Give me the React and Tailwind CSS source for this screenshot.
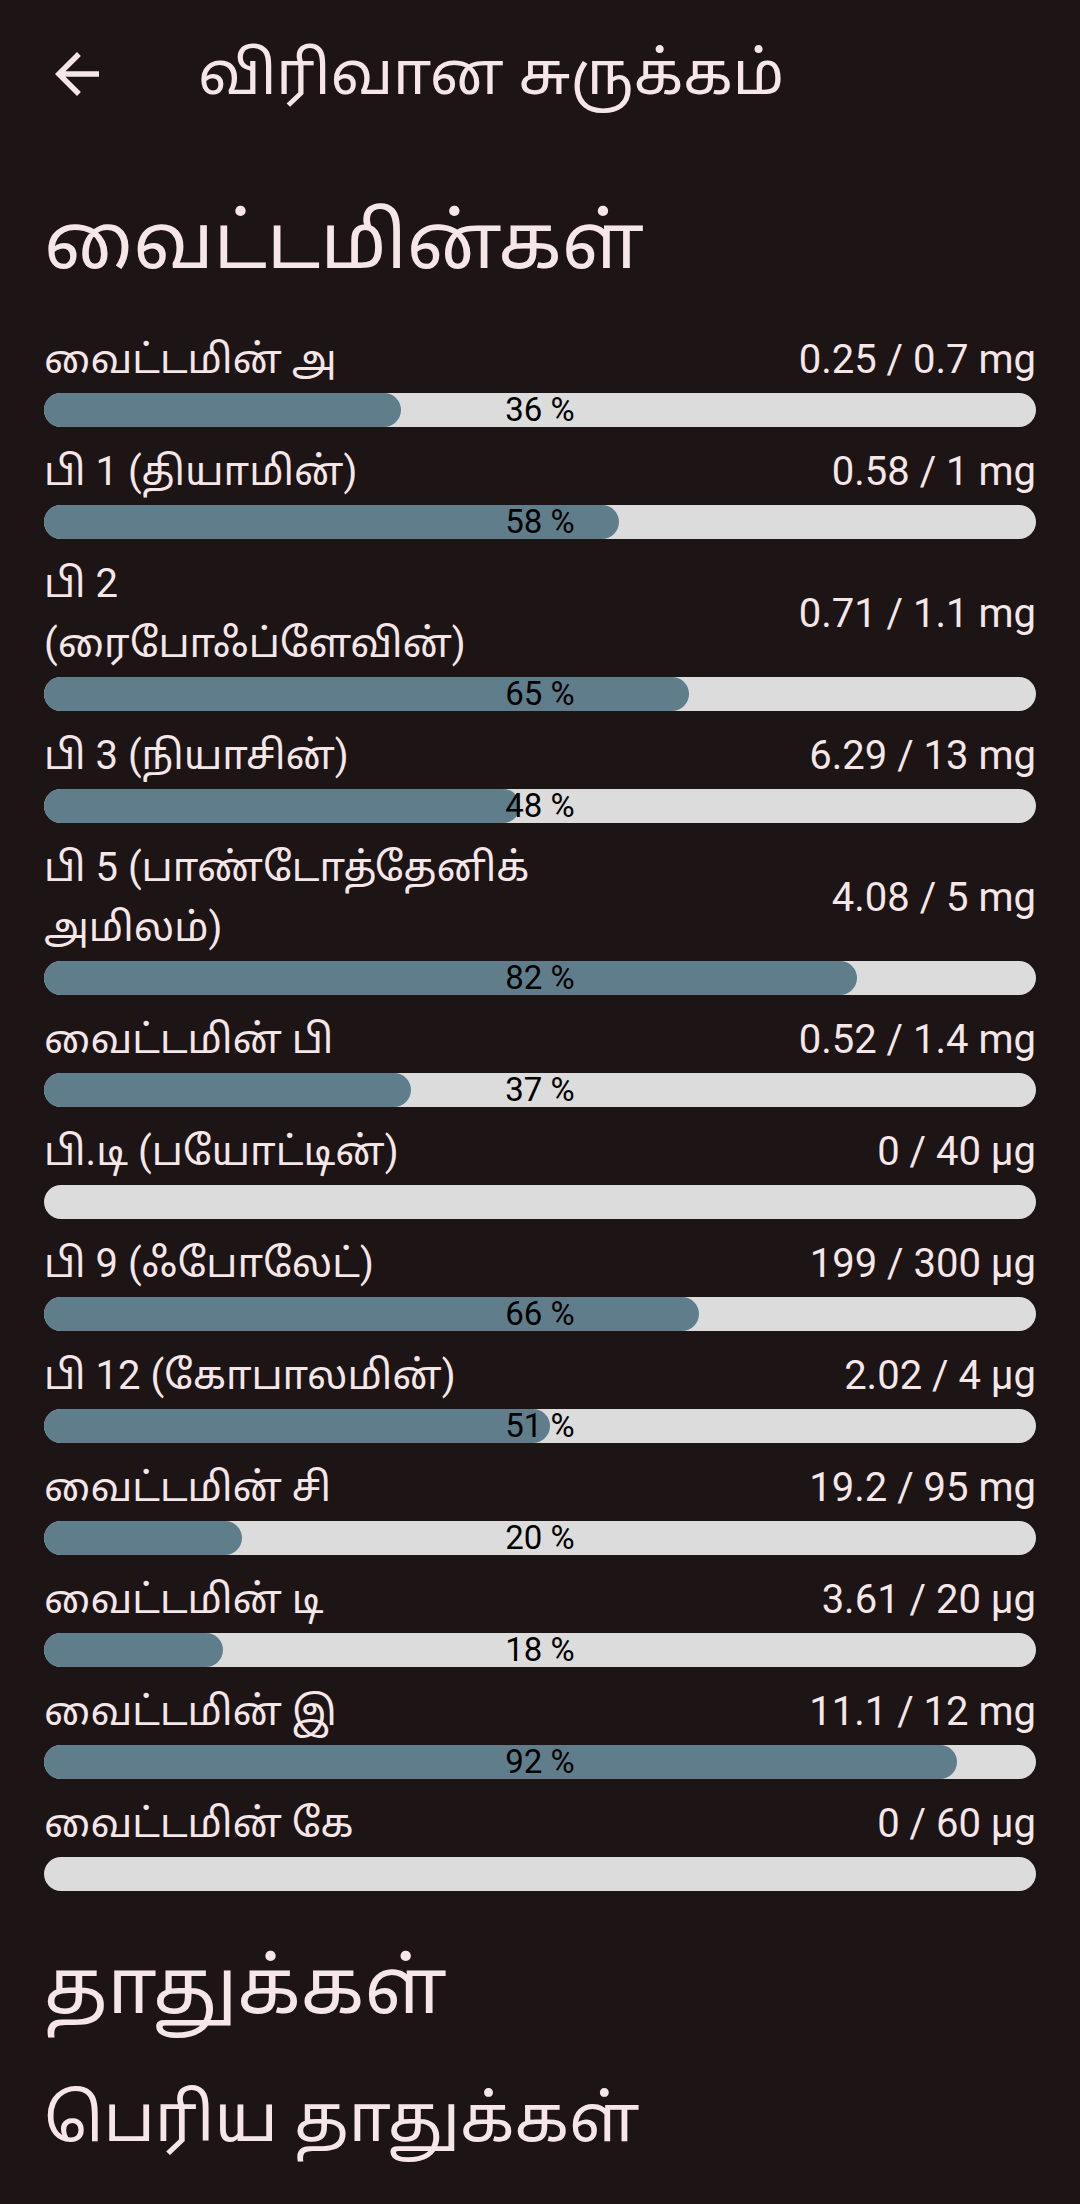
import React from "react";

const vitamins = [
  { name: "வைட்டமின் அ", value: "0.25 / 0.7 mg", pct: 36 },
  { name: "பி 1 (தியாமின்)", value: "0.58 / 1 mg", pct: 58 },
  { name: "பி 2\n(ரைபோஃப்ளேவின்)", value: "0.71 / 1.1 mg", pct: 65 },
  { name: "பி 3 (நியாசின்)", value: "6.29 / 13 mg", pct: 48 },
  { name: "பி 5 (பாண்டோத்தேனிக்\nஅமிலம்)", value: "4.08 / 5 mg", pct: 82 },
  { name: "வைட்டமின் பி", value: "0.52 / 1.4 mg", pct: 37 },
  { name: "பி.டி (பயோட்டின்)", value: "0 / 40 µg", pct: 0 },
  { name: "பி 9 (ஃபோலேட்)", value: "199 / 300 µg", pct: 66 },
  { name: "பி 12 (கோபாலமின்)", value: "2.02 / 4 µg", pct: 51 },
  { name: "வைட்டமின் சி", value: "19.2 / 95 mg", pct: 20 },
  { name: "வைட்டமின் டி", value: "3.61 / 20 µg", pct: 18 },
  { name: "வைட்டமின் இ", value: "11.1 / 12 mg", pct: 92 },
  { name: "வைட்டமின் கே", value: "0 / 60 µg", pct: 0 },
];

function NutrientRow({ name, value, pct }) {
  return (
    <div className="mb-[15px]">
      <div className="flex items-center justify-between">
        <span className="w-1/2 whitespace-pre-line text-[40px] leading-[60px]">
          {name}
        </span>
        <span className="text-[40px] leading-[60px]">{value}</span>
      </div>
      <div className="relative mt-[3px] h-[34px] w-full rounded-full bg-[#dcdcdc]">
        {pct > 0 && (
          <div
            className="h-full rounded-full bg-[#607d8b]"
            style={{ width: `${pct}%` }}
          />
        )}
        {pct > 0 && (
          <span className="absolute inset-0 flex items-center justify-center text-[33px] leading-[34px] text-black">
            {pct} %
          </span>
        )}
      </div>
    </div>
  );
}

export default function App() {
  return (
    <main
      className="min-h-[2204px] w-full bg-[#1c1415] text-[#f6e6e8]"
      style={{ fontFamily: 'Roboto, "Noto Sans Tamil", "Noto Sans", sans-serif' }}
    >
      {/* Toolbar */}
      <header className="flex h-[147px] items-center">
        <svg className="ml-[44px] h-[66px] w-[66px]" viewBox="0 0 24 24" fill="currentColor">
          <path d="M20 11H7.83l5.59-5.59L12 4l-8 8 8 8 1.41-1.41L7.83 13H20v-2z" />
        </svg>
        <h1 className="ml-[88px] text-[60px] leading-none">விரிவான சுருக்கம்</h1>
      </header>

      <section className="px-[44px]">
        <h2 className="mt-[40px] mb-[33px] text-[77px] leading-[110px]">வைட்டமின்கள்</h2>

        {vitamins.map((v) => (
          <NutrientRow key={v.name} {...v} />
        ))}

        <h2 className="mt-[36px] text-[77px] leading-[120px]">தாதுக்கள்</h2>
        <h3 className="mt-[17px] text-[66px] leading-[110px]">பெரிய தாதுக்கள்</h3>
      </section>
    </main>
  );
}
